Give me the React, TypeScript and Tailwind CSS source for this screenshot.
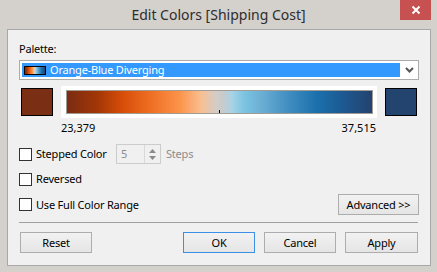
import React from "react";

const font = { fontFamily: '"Noto Sans", "Open Sans", Arial, sans-serif' };

function Checkbox({ label }: { label: string }) {
  return (
    <div className="flex items-center h-[16px]">
      <div className="w-[13px] h-[13px] border border-[#333333] bg-white shrink-0" />
      <span className="ml-[4px] text-[11px] tracking-[-0.2px] leading-[16px] text-black">{label}</span>
    </div>
  );
}

function Btn({ label, w, focused }: { label: string; w: string; focused?: boolean }) {
  return (
    <div
      className={`${w} h-[21px] flex items-center justify-center border ${
        focused ? "border-[#3c8fe6]" : "border-[#adadad]"
      } bg-gradient-to-b from-[#f2f2f2] to-[#e5e5e5] text-[11px] tracking-[-0.2px] leading-[16px] text-black`}
    >
      {label}
    </div>
  );
}

export default function App() {
  const grad =
    "linear-gradient(to right, #7a2c12 0%, #a23606 10%, #d64d08 18%, #ee6d22 27%, #fb944a 37%, #f9bf92 44%, #d2cdc8 49%, #c9cacb 51%, #a8d3e6 54%, #7cc4e2 58%, #6aaed3 64%, #3f8cc0 73%, #1b70ac 82%, #1d5a93 90%, #24426e 100%)";
  return (
    <div style={font} className="w-[437px] h-[272px] bg-[#d4d0cc] overflow-hidden flex flex-col">
      {/* title bar */}
      <div className="relative h-[29px] shrink-0 flex items-start">
        <div className="flex-1 h-[29px] flex items-center justify-center text-[14px] text-[#2d2d2d] pb-[1px]">
          Edit Colors [Shipping Cost]
        </div>
        <div className="absolute left-[400px] top-0 w-[31px] h-[20px] bg-[#c75050] flex items-center justify-center">
          <svg width="10" height="10" viewBox="0 0 10 10">
            <path d="M1.5 1.5 L8.5 8.5 M8.5 1.5 L1.5 8.5" stroke="white" strokeWidth="2" />
          </svg>
        </div>
      </div>
      {/* client */}
      <div className="ml-[7px] w-[424px] h-[237px] border border-[#a8a8a8] bg-[#f0f0f0] pl-[11px] pr-[11px] flex flex-col">
        <div className="mt-[11px] h-[16px] text-[11px] tracking-[-0.2px] leading-[16px] text-black">Palette:</div>
        {/* dropdown */}
        <div className="mt-[3px] h-[20px] w-[400px] border border-[#acacac] bg-white flex items-center pl-[2px]">
          <div className="w-[378px] h-[14px] bg-[#3399ff] flex items-center pl-[2px]">
            <div
              className="w-[22px] h-[9px] border border-black"
              style={{ background: grad }}
            />
            <span className="ml-[4px] text-[11px] tracking-[-0.2px] leading-[14px] text-white">Orange-Blue Diverging</span>
          </div>
          <div className="flex-1 flex items-center justify-center">
            <svg width="9" height="6" viewBox="0 0 9 6">
              <path d="M1 1 L4.5 4.5 L8 1" stroke="#555555" strokeWidth="2" fill="none" />
            </svg>
          </div>
        </div>
        {/* gradient row */}
        <div className="mt-[6px] h-[32px] flex items-center pl-[2px]">
          <div className="w-[32px] h-[28px] border border-black bg-[#7a2e14]" />
          <div className="ml-[8px] w-[316px] h-[32px] bg-white pt-[4px] pl-[5px] pr-[4px] pb-[4px]">
            <div className="relative w-full h-full border border-[#a09c94]" style={{ background: grad }}>
              <div className="absolute left-[152px] bottom-0 w-[1px] h-[3px] bg-black" />
            </div>
          </div>
          <div className="ml-[8px] w-[32px] h-[28px] border border-black bg-[#23446e]" />
        </div>
        {/* numbers */}
        <div className="mt-[2px] h-[16px] flex justify-between pl-[42px] pr-[43px] text-[11px] leading-[16px] text-black">
          <span>23,379</span>
          <span>37,515</span>
        </div>
        {/* stepped */}
        <div className="mt-[8px] h-[20px] flex items-center">
          <div className="w-[97px] flex items-center">
            <Checkbox label="Stepped Color" />
          </div>
          <div className="w-[45px] h-[20px] border border-[#cccccc] bg-[#f0f0f0] flex">
            <div className="flex-1 pl-[4px] text-[11px] leading-[18px] text-[#8c8c8c]">5</div>
            <div className="w-[16px] h-full border-l border-[#d9d9d9] flex flex-col items-center justify-center gap-[3px]">
              <svg width="7" height="4" viewBox="0 0 7 4">
                <path d="M0 4 L3.5 0 L7 4 Z" fill="#8a8a8a" />
              </svg>
              <svg width="7" height="4" viewBox="0 0 7 4">
                <path d="M0 0 L3.5 4 L7 0 Z" fill="#8a8a8a" />
              </svg>
            </div>
          </div>
          <span className="ml-[5px] text-[11px] tracking-[-0.2px] leading-[16px] text-[#8c8c8c]">Steps</span>
        </div>
        {/* reversed */}
        <div className="mt-[7px]">
          <Checkbox label="Reversed" />
        </div>
        {/* full range */}
        <div className="mt-[7px] h-[21px] flex items-center justify-between">
          <Checkbox label="Use Full Color Range" />
          <Btn label="Advanced >>" w="w-[81px]" />
        </div>
        <div className="mt-[7px] h-[1px] w-[399px] bg-[#a0a0a0]" />
        <div className="mt-[9px] flex pl-[1px]">
          <Btn label="Reset" w="w-[72px]" />
          <div className="ml-[91px]">
            <Btn label="OK" w="w-[72px]" focused />
          </div>
          <div className="ml-[9px]">
            <Btn label="Cancel" w="w-[72px]" />
          </div>
          <div className="ml-[9px]">
            <Btn label="Apply" w="w-[73px]" />
          </div>
        </div>
      </div>
    </div>
  );
}
